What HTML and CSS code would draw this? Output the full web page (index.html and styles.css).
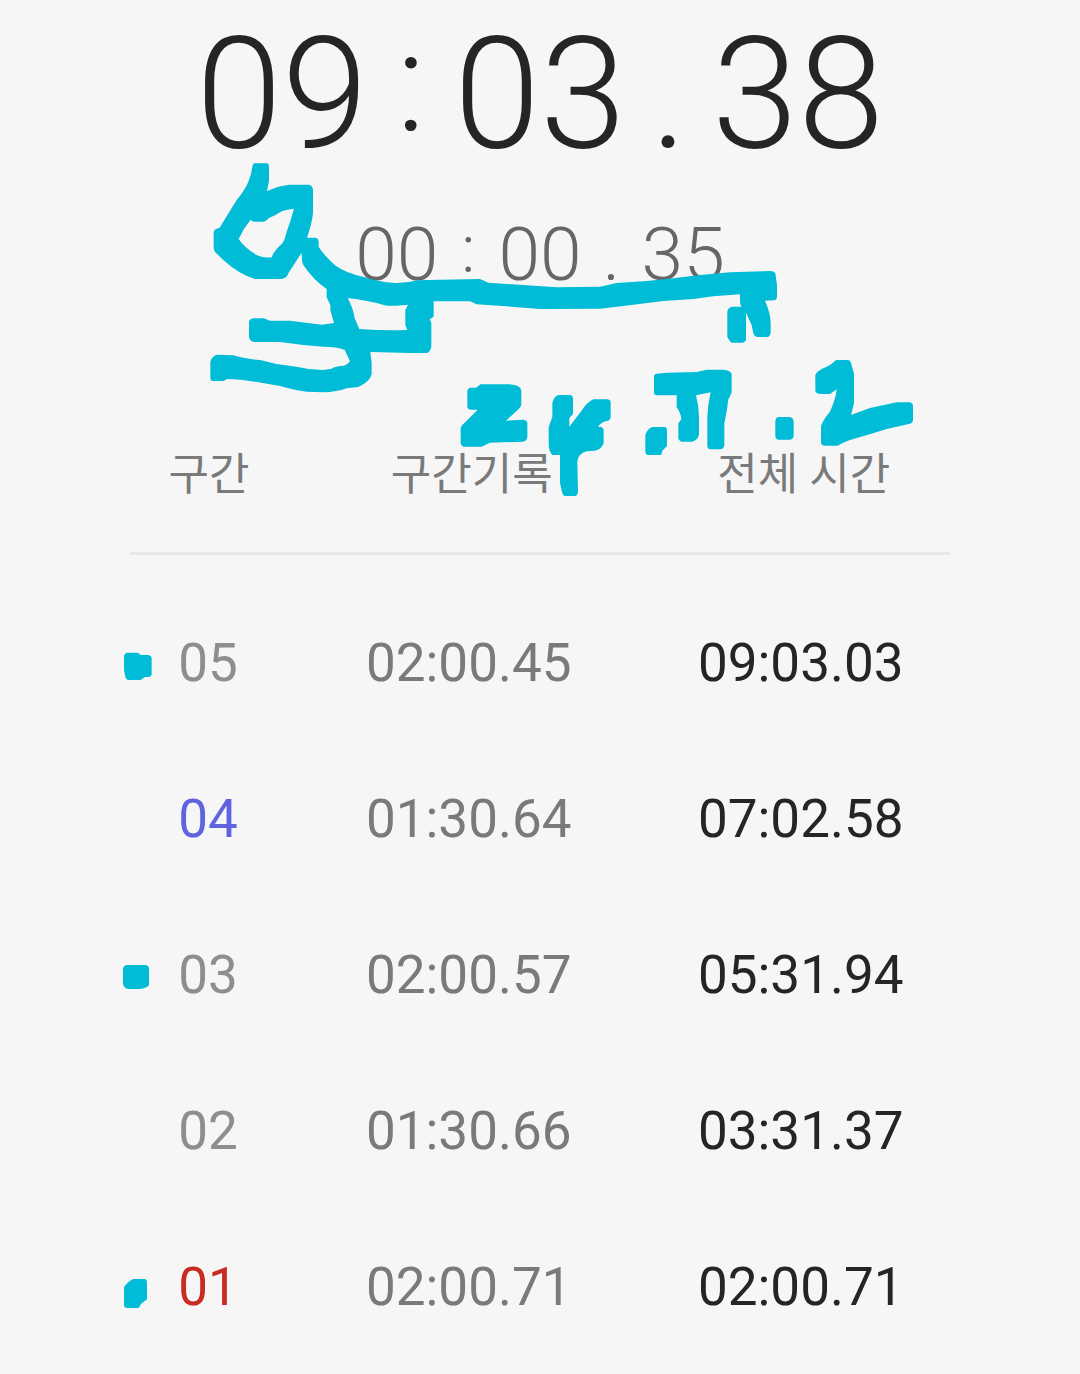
FILE: index.html
```
<!DOCTYPE html>
<html lang="ko">
<head>
<meta charset="utf-8">
<meta name="viewport" content="width=device-width, initial-scale=1">
<title>스톱워치</title>
<link rel="stylesheet" href="styles.css">
</head>
<body>
<main class="stopwatch">
  <div class="clock clock-total">
    <span>09</span><span class="sep colon">:</span><span>03</span><span class="sep">.</span><span>38</span>
  </div>
  <div class="clock clock-lap">
    <span>00</span><span class="sep colon">:</span><span>00</span><span class="sep">.</span><span>35</span>
  </div>
  <table class="laps">
    <thead>
      <tr><th class="col-lap" scope="col">구간</th><th class="col-split" scope="col">구간기록</th><th class="col-total" scope="col">전체 시간</th></tr>
    </thead>
    <tbody>
      <tr><td class="lap">05</td><td class="split">02:00.45</td><td class="total">09:03.03</td></tr>
      <tr><td class="lap fastest">04</td><td class="split">01:30.64</td><td class="total">07:02.58</td></tr>
      <tr><td class="lap">03</td><td class="split">02:00.57</td><td class="total">05:31.94</td></tr>
      <tr><td class="lap">02</td><td class="split">01:30.66</td><td class="total">03:31.37</td></tr>
      <tr><td class="lap slowest">01</td><td class="split">02:00.71</td><td class="total">02:00.71</td></tr>
    </tbody>
  </table>
  <!-- freehand marker notes over the screen -->
  <svg class="ink" viewBox="0 0 1080 1374" aria-hidden="true">
    <g transform="translate(190 150) scale(.33333)" fill-rule="evenodd">
      <path d="M192 40H232Q237 42 237 50V92L231 124Q262 108 298 104H355Q369 106 369 120V190Q366 220 351 263H378Q386 266 386 275V290Q400 315 437 347Q470 370 522 381Q560 395 615 399Q650 400 682 391L750 389L870 387L895 398L1010 406L1100 412L1230 410L1280 399L1370 393L1450 385L1530 375L1620 367L1740 363Q1754 364 1756 370L1761 405V440Q1760 450 1753 451L1725 452Q1742 490 1742 520V548Q1740 560 1732 561H1702Q1693 560 1690 550L1685 525L1668 488Q1650 470 1650 455V433L1570 439L1510 447L1420 453L1300 468L1230 476L1050 477L950 469L860 463L840 454H731V500L719 508L724 518V590Q722 605 710 609H665L541 606L545 640V672Q540 695 505 711L470 715Q440 726 400 727L350 725Q300 718 270 708L205 697Q150 687 112 687L100 693H66Q61 690 61 685V635Q66 618 80 614L130 616Q160 626 210 630L260 642L320 650Q360 660 400 660L425 656Q435 648 462 647Q475 642 480 634L464 600Q440 590 400 590L340 585L270 576H190Q177 570 177 560V515Q179 507 190 505H222L240 512H300L395 524L432 519L421 480V465L410 442V417Q370 390 340 345Q335 335 335 308L295 370Q292 384 275 387H195Q150 375 100 330L75 306Q71 300 71 290V245Q74 236 89 233Q115 190 140 150Q165 120 175 95Q185 70 187 50Q188 42 192 40ZM146 267Q160 235 182 209L190 215H222Q232 210 237 204Q255 198 275 184Q290 178 312 176Q303 210 290 245Q284 270 277 280Q250 305 245 322Q220 325 200 315Q165 295 146 267ZM473 444Q490 475 494 505L508 537Q580 542 652 540L646 525V480L654 464L620 467H590Q530 450 473 444Z"/>
      <path d="M1625 470H1660Q1668 473 1668 482V568Q1667 577 1658 578H1626Q1620 577 1612 560V485Q1614 473 1625 470Z"/>
    </g>
    <g transform="translate(440 340) scale(.33333)">
      <path d="M92 143H108L122 133H208Q243 136 244 152V193Q243 204 234 209L198 242L250 239Q261 241 262 248V292Q261 302 250 305L150 308L125 320H70Q62 318 62 310V264Q63 255 74 248L113 209H92Q82 207 82 200V153Q83 144 92 143Z"/>
      <path d="M355 165H392Q399 168 399 175V222L388 234V260L424 213Q440 188 460 178H503Q512 180 512 187V232Q510 243 500 243Q483 247 474 260H482Q491 263 491 272V308Q488 325 465 332L440 334Q415 340 412 365L414 455Q413 467 404 468H376Q368 467 366 455L360 430V345H337Q326 335 326 310V262L337 230V190Q342 168 355 165Z"/>
    </g>
    <g transform="translate(640 340) scale(.33333)">
      <path d="M50 101L80 98L170 96L200 89H250Q272 91 275 102V155Q274 162 265 178Q262 210 253 250V315Q251 327 242 328H210Q202 326 202 315V230Q204 190 212 157L168 166Q177 200 177 230V282Q175 300 156 305H124Q116 303 115 295V250L124 238Q123 220 110 202V166H50Q42 164 42 158V110Q42 102 50 101Z"/>
      <path d="M38 261H75Q81 263 81 270V318L67 332L64 345H22Q16 342 16 335V285Q22 265 38 261Z"/>
      <path d="M415 231H450Q461 235 461 245V288Q460 298 450 299H415Q406 297 406 288V243Q407 233 415 231Z"/>
      <path d="M588 60H625Q634 63 635 78L642 100V190L633 225L690 204L770 187H810Q819 190 819 197V240Q818 250 810 251L740 267Q690 283 640 297Q610 306 593 317H555Q544 316 543 308V258Q550 238 570 215Q588 175 590 148L570 162H540Q527 160 526 152V105Q530 95 545 87Q575 75 588 60Z"/>
    </g>
    <g transform="translate(110 620) scale(.33333)">
      <path d="M50 98H82Q90 100 92 105H115Q125 107 125 115V162Q124 171 115 171H105L92 180H55Q46 179 45 165L42 150V108Q43 100 50 98Z"/>
    </g>
    <g transform="translate(110 940) scale(.33333)">
      <path d="M50 75H107Q117 77 117 85V135Q114 142 90 147H55Q42 146 39 132V87Q40 77 50 75Z"/>
    </g>
    <g transform="translate(110 1250) scale(.33333)">
      <path d="M70 87H105Q111 89 111 96V148L92 163Q90 173 84 174H50Q42 173 42 166V112Q52 95 70 87Z"/>
    </g>
  </svg>
</main>
</body>
</html>
```
FILE: styles.css
```
body {
  margin: 0;
  background: #f6f6f6;
  color: #252525;
  font-family: Roboto, "Noto Sans CJK KR", sans-serif;
}

.stopwatch {
  position: relative;
  max-width: 1080px;
  margin: 0 auto;
  padding-bottom: 8px;
}

.clock {
  display: flex;
  justify-content: center;
  font-weight: 300;
}

.clock .sep {
  text-align: center;
}

.clock-total {
  padding-top: 2px;
  font-size: 155px;
  line-height: 184px;
}

.clock-total .sep {
  width: 86px;
}

.clock-total .colon {
  font-size: 140px;
  line-height: 160px;
}

.clock-lap {
  padding-top: 24px;
  color: #666;
  font-size: 75px;
  line-height: 88px;
}

.clock-lap .sep {
  width: 60px;
}

.clock-lap .colon {
  font-size: 67px;
  line-height: 78px;
}

.laps {
  width: 76%;
  margin: 100px auto 0;
  border-collapse: separate;
  border-spacing: 0;
  table-layout: fixed;
  text-align: center;
}

.laps th {
  height: 146px;
  padding: 0 0 8px 2px;
  border-bottom: 3px solid #e6e6e6;
  color: #7a7a7a;
  font-size: 44px;
  font-weight: 400;
  vertical-align: middle;
}

.laps .col-lap {
  width: 19%;
}

.laps .col-split {
  width: 45%;
}

.laps .col-total {
  width: 36%;
}

.laps tbody::before {
  content: "";
  display: block;
  height: 30px;
}

.laps td {
  height: 156px;
  padding: 0;
  font-size: 53px;
}

.laps .lap {
  color: #8e8e8e;
}

.laps .split,
.laps .total {
  padding-right: 4px;
}

.laps .split {
  color: #7a7a7a;
}

.laps .fastest {
  color: #5f63e0;
}

.laps .slowest {
  color: #c92a22;
}

.ink {
  position: absolute;
  top: 0;
  left: 0;
  width: 100%;
  fill: #00bcd7;
  pointer-events: none;
}
```
